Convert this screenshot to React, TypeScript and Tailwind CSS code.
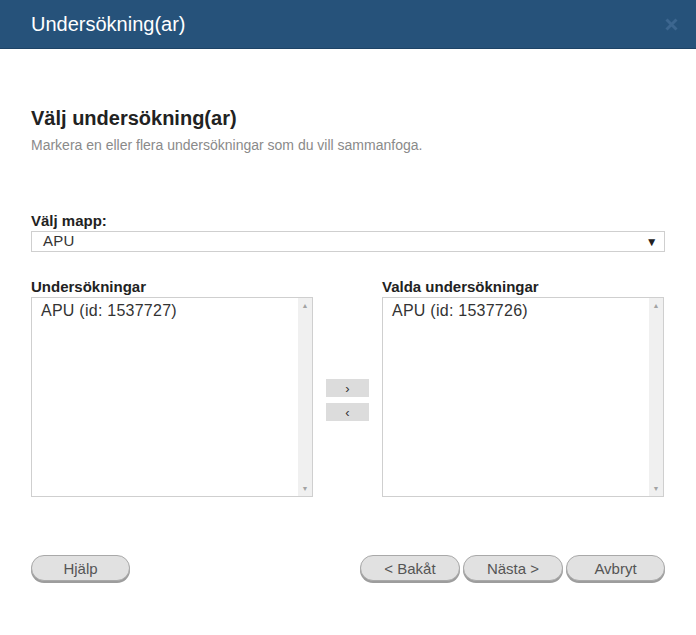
import React from 'react';

function ListBox({ items }: { items: string[] }) {
  return (
    <div className="flex h-[200px] border border-[#cfcfcf] bg-white">
      <div className="flex-1 px-[9px] pt-[1px] text-[16px] leading-[24px] tracking-[0.25px] text-[#333]">
        {items.map((it) => (
          <div key={it}>{it}</div>
        ))}
      </div>
      <div className="flex w-[14px] flex-col items-center justify-between bg-[#f0f0f0] py-[4px] text-[7px] leading-none text-[#a3a3a3]">
        <span>▲</span>
        <span>▼</span>
      </div>
    </div>
  );
}

function PillButton({ label, width }: { label: string; width: string }) {
  return (
    <button
      className={`${width} h-[26px] rounded-full border border-[#a9a9a9] bg-[#e1e1e1] text-[15px] leading-none text-[#555] shadow-[0_2px_0_#9d9d9d]`}
    >
      {label}
    </button>
  );
}

export default function App() {
  return (
    <div className="h-[635px] w-[696px] bg-white font-['Liberation_Sans',Arial,sans-serif]">
      <div className="flex h-[49px] items-center justify-between border-b border-[#1d4366] bg-[#26527a] pl-[31px] pr-[18px]">
        <h1 className="text-[20px] text-white">Undersökning(ar)</h1>
        <svg width="13" height="13" viewBox="0 0 13 13">
          <path d="M1.5 1.5 L11.5 11.5 M11.5 1.5 L1.5 11.5" stroke="#3c668f" strokeWidth="3" />
        </svg>
      </div>

      <div className="px-[31px] pt-[54px]">
        <h2 className="text-[20px] leading-[30px] font-bold text-[#222]">Välj undersökning(ar)</h2>
        <p className="mt-[2px] text-[14px] leading-[21px] text-[#8a8a8a]">
          Markera en eller flera undersökningar som du vill sammanfoga.
        </p>

        <div className="mt-[56px] text-[15px] leading-[18px] font-bold text-[#222]">Välj mapp:</div>
        <div className="mt-[1px] flex h-[21px] items-center justify-between border border-[#cfcfcf] bg-white pl-[11px] pr-[6px] text-[15px] tracking-[0.25px] text-[#333]">
          <span>APU</span>
          <span className="text-[12px] text-[#222]">▼</span>
        </div>

        <div className="mt-[26px] flex">
          <div className="w-[282px]">
            <div className="mb-[1px] text-[15px] leading-[18px] font-bold text-[#222]">Undersökningar</div>
            <ListBox items={['APU (id: 1537727)']} />
          </div>
          <div className="flex w-[69px] flex-col items-center pt-[101px]">
            <button className="h-[18px] w-[43px] bg-[#dcdcdc] text-[13px] leading-none text-[#333]">›</button>
            <button className="mt-[6px] h-[18px] w-[43px] bg-[#dcdcdc] text-[13px] leading-none text-[#333]">‹</button>
          </div>
          <div className="w-[282px]">
            <div className="mb-[1px] text-[15px] leading-[18px] font-bold text-[#222]">Valda undersökningar</div>
            <ListBox items={['APU (id: 1537726)']} />
          </div>
        </div>

        <div className="mt-[58px] flex items-center">
          <PillButton label="Hjälp" width="w-[99px]" />
          <div className="ml-auto flex gap-[3px]">
            <PillButton label="< Bakåt" width="w-[100px]" />
            <PillButton label="Nästa >" width="w-[100px]" />
            <PillButton label="Avbryt" width="w-[99px]" />
          </div>
        </div>
      </div>
    </div>
  );
}
